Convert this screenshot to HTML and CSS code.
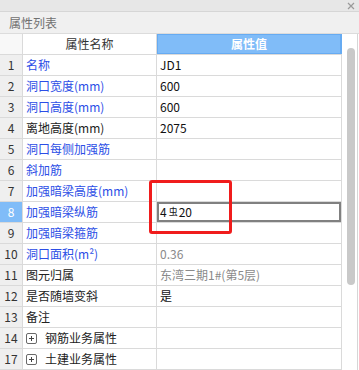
FILE: index.html
```html
<!DOCTYPE html>
<html lang="zh">
<head>
<meta charset="utf-8">
<link rel="stylesheet" href="styles.css">
</head>
<body>
<div class="panel">
  <div class="topbar">
    <svg class="close" width="8" height="8" viewBox="0 0 8 8"><path d="M1 1L7 7M7 1L1 7" stroke="#9a9a9a" stroke-width="1.2"/></svg>
  </div>
  <div class="title">属性列表</div>
  <div class="body">
    <div class="grid">
      <div class="row head"><div class="num"></div><div class="name">属性名称</div><div class="val">属性值</div></div>
      <div class="row"><div class="num">1</div><div class="name blue">名称</div><div class="val">JD1</div></div>
      <div class="row"><div class="num">2</div><div class="name blue">洞口宽度(mm)</div><div class="val">600</div></div>
      <div class="row"><div class="num">3</div><div class="name blue">洞口高度(mm)</div><div class="val">600</div></div>
      <div class="row"><div class="num">4</div><div class="name">离地高度(mm)</div><div class="val">2075</div></div>
      <div class="row"><div class="num">5</div><div class="name blue">洞口每侧加强筋</div><div class="val"></div></div>
      <div class="row"><div class="num">6</div><div class="name blue">斜加筋</div><div class="val"></div></div>
      <div class="row"><div class="num">7</div><div class="name blue">加强暗梁高度(mm)</div><div class="val"></div></div>
      <div class="row sel"><div class="num">8</div><div class="name blue">加强暗梁纵筋</div><div class="val edit">4<span class="steel">虫</span>20</div></div>
      <div class="row"><div class="num">9</div><div class="name blue">加强暗梁箍筋</div><div class="val"></div></div>
      <div class="row"><div class="num">10</div><div class="name blue">洞口面积(m²)</div><div class="val gray">0.36</div></div>
      <div class="row"><div class="num">11</div><div class="name">图元归属</div><div class="val gray">东湾三期1#(第5层)</div></div>
      <div class="row"><div class="num">12</div><div class="name">是否随墙变斜</div><div class="val">是</div></div>
      <div class="row"><div class="num">13</div><div class="name">备注</div><div class="val"></div></div>
      <div class="row"><div class="num">14</div><div class="name group"><span class="plus"></span>钢筋业务属性</div><div class="val"></div></div>
      <div class="row"><div class="num">17</div><div class="name group"><span class="plus"></span>土建业务属性</div><div class="val"></div></div>
    </div>
    <div class="scroll"><div class="thumb"></div></div>
  </div>
  <div class="mark"></div>
</div>
</body>
</html>
```
FILE: styles.css
```css
html, body {
  margin: 0;
  padding: 0;
  background: #ffffff;
}
.panel {
  position: relative;
  width: 359px;
  height: 370px;
  overflow: hidden;
  font-family: "Noto Sans CJK SC", "Microsoft YaHei", sans-serif;
  font-size: 12px;
  color: #222;
}
.topbar {
  height: 11px;
  background: #e7e7e7;
  border-bottom: 1px solid #d6d6d6;
  display: flex;
  justify-content: flex-end;
  align-items: center;
  padding-right: 4px;
}
.close {
  display: block;
}
.title {
  height: 21px;
  line-height: 21px;
  background: #f0f0f0;
  border-bottom: 1px solid #dcdcdc;
  padding-left: 9px;
  color: #707070;
}
.body {
  display: flex;
}
.grid {
  width: 342px;
}
.row {
  display: grid;
  grid-template-columns: 23px 134px 185px;
  height: 20px;
  border-bottom: 1px solid #dadada;
  line-height: 20px;
}
.row > div {
  border-right: 1px solid #dadada;
  white-space: nowrap;
  overflow: hidden;
}
.num {
  background: #efefef;
  text-align: center;
  color: #333;
}
.name {
  padding-left: 3px;
}
.val {
  padding-left: 3px;
  color: #111;
}
.head .num {
  background: #f8f8f8;
}
.head .name {
  text-align: center;
  padding-left: 0;
  color: #333;
}
.head .val {
  background: #80bcf8;
  color: #ffffff;
  text-align: center;
  padding-left: 0;
  font-weight: bold;
  box-shadow: inset 0 0 0 1px #66abf2;
  border-right-color: #66abf2;
}
.blue {
  color: #2c4ee6;
}
.gray {
  color: #8a8a8a;
}
.sel .num {
  background: #80bcf8;
  color: #ffffff;
}
.edit {
  box-shadow: inset 0 0 0 2px #808080;
}
.steel {
  font-size: 9px;
  position: relative;
  top: -2px;
  margin: 0 1px 0 2px;
}
.group {
  display: flex;
  align-items: center;
}
.plus {
  position: relative;
  width: 9px;
  height: 9px;
  border: 1px solid #6a6a6a;
  border-radius: 2px;
  margin-right: 8px;
  box-sizing: content-box;
}
.plus::before,
.plus::after {
  content: "";
  position: absolute;
  background: #444;
}
.plus::before {
  left: 2px;
  top: 4px;
  width: 5px;
  height: 1px;
}
.plus::after {
  left: 4px;
  top: 2px;
  width: 1px;
  height: 5px;
}
.scroll {
  width: 16px;
  border-right: 1px solid #d6d6d6;
  background: #ffffff;
  padding-top: 14px;
  box-sizing: border-box;
  height: 340px;
}
.thumb {
  width: 8px;
  height: 237px;
  margin-left: 5px;
  background: #c9c9c9;
  border-radius: 4px;
}
.mark {
  position: absolute;
  left: 149px;
  top: 180px;
  width: 83px;
  height: 54px;
  box-sizing: border-box;
  border: 3px solid #f01c1c;
  border-radius: 3px;
}
```
